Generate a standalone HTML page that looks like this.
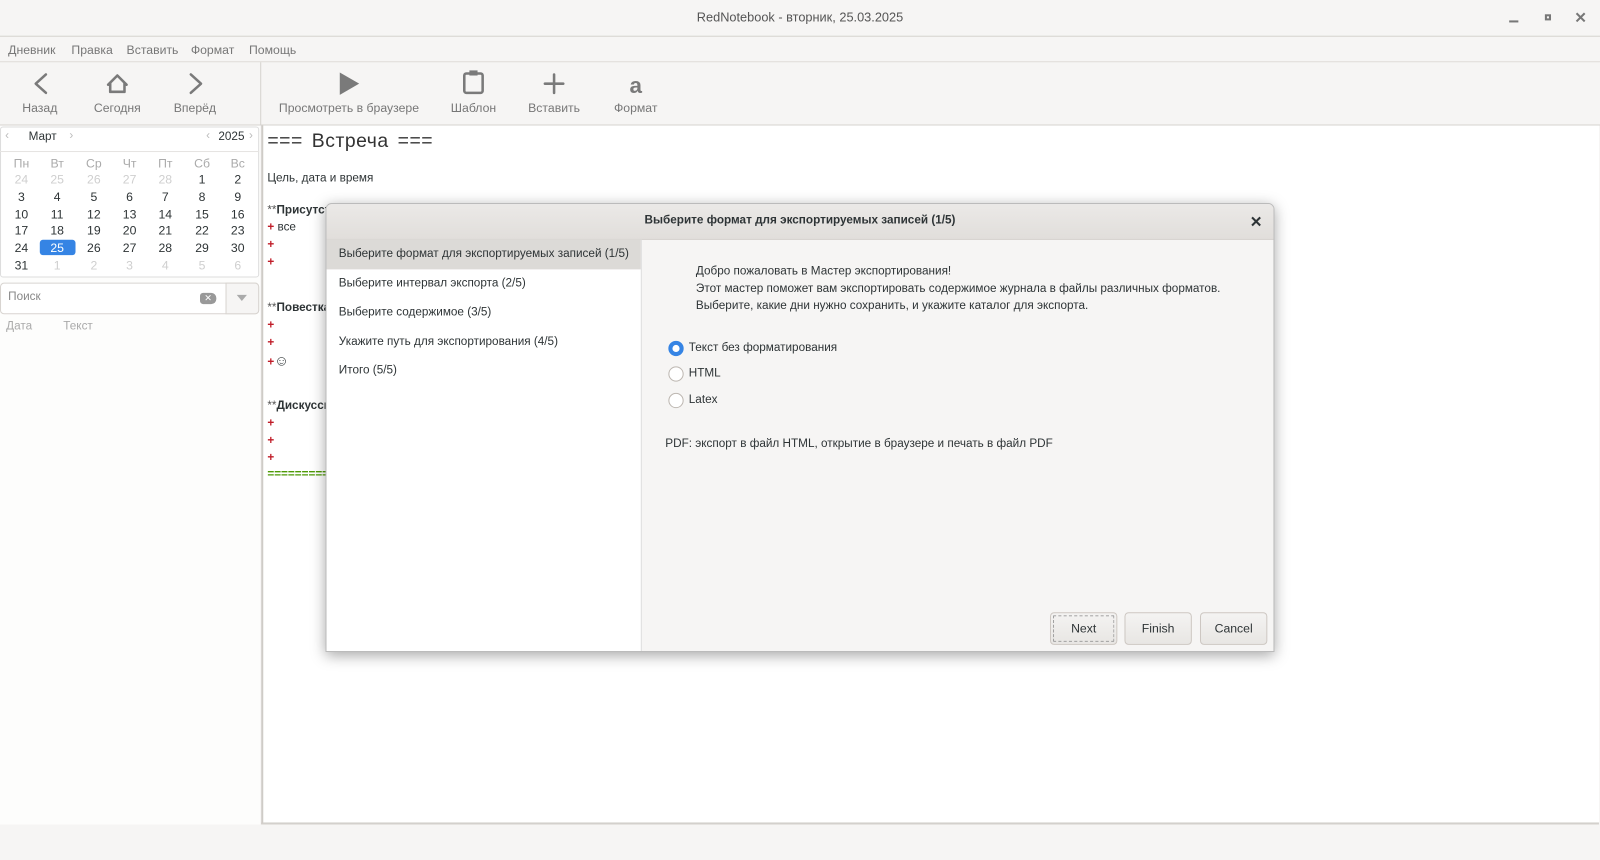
<!DOCTYPE html>
<html><head><meta charset="utf-8"><style>
*{box-sizing:border-box;margin:0;padding:0}
html,body{width:1600px;height:860px;overflow:hidden;background:#f6f5f4}
body{font-family:"Liberation Sans","DejaVu Sans",sans-serif}
#s{position:absolute;left:0;top:0;width:1568px;height:843px;transform:scale(1.0204);transform-origin:0 0;background:#f6f5f4;color:#2e3436;font-size:11.5px}
.a{position:absolute;white-space:nowrap}
.c{transform:translateX(-50%)}
.tb{color:#777;font-size:12px}
.cal span{position:absolute;transform:translateX(-50%);font-size:12px}
.g{color:#cfcfcf}
.h{color:#aaa}
.red{color:#c01c28;font-weight:bold}
.btn{position:absolute;top:600px;height:32px;width:66px;border:1px solid #cdc7c2;border-radius:4px;background:linear-gradient(#f4f3f2,#e8e6e3);text-align:center;line-height:30px;font-size:12px;color:#2e3436}
.radio{position:absolute;width:15px;height:15px;border-radius:50%;border:1px solid #bdb7b1;background:#fff}
</style></head><body><div id="s">
<div class="a c" style="left:784px;top:10px;font-size:12.5px;color:#555">RedNotebook - вторник, 25.03.2025</div>
<div class="a" style="left:1479px;top:20px;width:9px;height:2px;background:#777"></div>
<div class="a" style="left:1514px;top:14px;width:6px;height:6px;border:2px solid #777"></div>
<svg class="a" style="left:1544px;top:12px" width="10" height="10"><path d="M1 1L9 9M9 1L1 9" stroke="#777" stroke-width="2"/></svg>
<div class="a" style="left:0;top:35px;width:1568px;height:1px;background:#d6d3cf"></div>
<div class="a tb" style="left:8px;top:42px">Дневник</div>
<div class="a tb" style="left:70px;top:42px">Правка</div>
<div class="a tb" style="left:124px;top:42px">Вставить</div>
<div class="a tb" style="left:187px;top:42px">Формат</div>
<div class="a tb" style="left:244px;top:42px">Помощь</div>
<div class="a" style="left:0;top:60px;width:1568px;height:1px;background:#e0ddd9"></div>
<svg class="a" style="left:0;top:62px" width="660" height="40">
<g fill="none" stroke="#7a7a7a" stroke-width="2.5" stroke-linecap="round" stroke-linejoin="round">
<path d="M45 11 L35 20 L45 29"/><path d="M187 11 L197 20 L187 29"/>
<path d="M106 21 L115 12 L124 21 M108 19 V28 H122 V19"/>
<path d="M543 11 V29 M534 20 H552"/>
<rect x="455" y="10" width="18" height="19" rx="2"/></g>
<path d="M333 9 L352 20 L333 31 Z" fill="#7a7a7a"/>
<rect x="460" y="7" width="8" height="5" fill="#7a7a7a"/>
<text x="623" y="29" font-size="22" font-weight="bold" fill="#7a7a7a" text-anchor="middle" font-family="Liberation Sans">a</text>
</svg>
<div class="a c tb" style="left:39px;top:99px">Назад</div>
<div class="a c tb" style="left:115px;top:99px">Сегодня</div>
<div class="a c tb" style="left:191px;top:99px">Вперёд</div>
<div class="a c tb" style="left:342px;top:99px">Просмотреть в браузере</div>
<div class="a c tb" style="left:464px;top:99px">Шаблон</div>
<div class="a c tb" style="left:543px;top:99px">Вставить</div>
<div class="a c tb" style="left:623px;top:99px">Формат</div>
<div class="a" style="left:255px;top:61px;width:1px;height:62px;background:#d6d3cf"></div>
<div class="a" style="left:0;top:122px;width:1568px;height:1px;background:#d6d3cf"></div>
<div class="a" style="left:0;top:123px;width:255px;height:685px;background:#fdfdfc"></div>
<div class="a" style="left:0;top:124px;width:254px;height:148px;background:#fff;border:1px solid #ddd;border-radius:3px"></div>
<div class="a" style="left:0;top:148px;width:254px;height:1px;background:#e6e4e1"></div>
<div class="a" style="left:5px;top:127px;color:#bbb">‹</div>
<div class="a" style="left:28px;top:128px">Март</div>
<div class="a" style="left:68px;top:127px;color:#bbb">›</div>
<div class="a" style="left:202px;top:127px;color:#bbb">‹</div>
<div class="a" style="left:214px;top:128px">2025</div>
<div class="a" style="left:244px;top:127px;color:#bbb">›</div>
<div class="a" style="left:39px;top:235px;width:35px;height:15px;background:#3584e4;border-radius:3px"></div>
<div class="cal">
<span class="h" style="left:21px;top:153px">Пн</span><span class="h" style="left:56px;top:153px">Вт</span><span class="h" style="left:92px;top:153px">Ср</span><span class="h" style="left:127px;top:153px">Чт</span><span class="h" style="left:162px;top:153px">Пт</span><span class="h" style="left:198px;top:153px">Сб</span><span class="h" style="left:233px;top:153px">Вс</span>
<span class="g" style="left:21px;top:169px">24</span><span class="g" style="left:56px;top:169px">25</span><span class="g" style="left:92px;top:169px">26</span><span class="g" style="left:127px;top:169px">27</span><span class="g" style="left:162px;top:169px">28</span><span style="left:198px;top:169px">1</span><span style="left:233px;top:169px">2</span>
<span style="left:21px;top:186px">3</span><span style="left:56px;top:186px">4</span><span style="left:92px;top:186px">5</span><span style="left:127px;top:186px">6</span><span style="left:162px;top:186px">7</span><span style="left:198px;top:186px">8</span><span style="left:233px;top:186px">9</span>
<span style="left:21px;top:203px">10</span><span style="left:56px;top:203px">11</span><span style="left:92px;top:203px">12</span><span style="left:127px;top:203px">13</span><span style="left:162px;top:203px">14</span><span style="left:198px;top:203px">15</span><span style="left:233px;top:203px">16</span>
<span style="left:21px;top:219px">17</span><span style="left:56px;top:219px">18</span><span style="left:92px;top:219px">19</span><span style="left:127px;top:219px">20</span><span style="left:162px;top:219px">21</span><span style="left:198px;top:219px">22</span><span style="left:233px;top:219px">23</span>
<span style="left:21px;top:236px">24</span><span style="left:56px;top:236px;color:#fff">25</span><span style="left:92px;top:236px">26</span><span style="left:127px;top:236px">27</span><span style="left:162px;top:236px">28</span><span style="left:198px;top:236px">29</span><span style="left:233px;top:236px">30</span>
<span style="left:21px;top:253px">31</span><span class="g" style="left:56px;top:253px">1</span><span class="g" style="left:92px;top:253px">2</span><span class="g" style="left:127px;top:253px">3</span><span class="g" style="left:162px;top:253px">4</span><span class="g" style="left:198px;top:253px">5</span><span class="g" style="left:233px;top:253px">6</span>
</div>
<div class="a" style="left:0;top:277px;width:254px;height:31px;background:#fff;border:1px solid #d8d4d0;border-radius:4px"></div>
<div class="a" style="left:221px;top:277px;width:33px;height:31px;background:#f6f5f4;border:1px solid #d8d4d0;border-radius:0 4px 4px 0"></div>
<div class="a" style="left:8px;top:285px;color:#888">Поиск</div>
<div class="a" style="left:196px;top:287px;width:16px;height:11px;background:#999;border-radius:3px 5px 5px 3px;color:#fff;font-size:9px;line-height:11px;text-align:center">✕</div>
<div class="a" style="left:232px;top:289px;width:0;height:0;border-left:5px solid transparent;border-right:5px solid transparent;border-top:6px solid #aaa"></div>
<div class="a h" style="left:6px;top:314px">Дата</div>
<div class="a h" style="left:62px;top:314px">Текст</div>
<div class="a" style="left:256px;top:123px;width:1311px;height:685px;background:#fff;border-left:2px solid #cfcbc7;border-bottom:2px solid #d3d0cc"></div>
<div class="a" style="left:262px;top:128px;font-size:19px;color:#333;word-spacing:3px;letter-spacing:0.5px">=== Встреча ===</div>
<div class="a" style="left:262px;top:169px">Цель, дата и время</div>
<div class="a" style="left:262px;top:200px"><span style="color:#555">**</span><b>Присутствующие</b></div>
<div class="a" style="left:262px;top:217px"><span class="red">+</span> все</div>
<div class="a red" style="left:262px;top:234px">+</div>
<div class="a red" style="left:262px;top:251px">+</div>
<div class="a" style="left:262px;top:296px"><span style="color:#555">**</span><b>Повестка</b></div>
<div class="a red" style="left:262px;top:313px">+</div>
<div class="a red" style="left:262px;top:330px">+</div>
<div class="a" style="left:262px;top:345px"><span class="red">+</span><span style="font-size:14px">☺</span></div>
<div class="a" style="left:262px;top:392px"><span style="color:#555">**</span><b>Дискуссия</b></div>
<div class="a red" style="left:262px;top:409px">+</div>
<div class="a red" style="left:262px;top:426px">+</div>
<div class="a red" style="left:262px;top:443px">+</div>
<div class="a" style="left:262px;top:459px;color:#4e9a06;font-weight:bold">==========</div>
<div class="a" style="left:319px;top:199px;width:930px;height:440px;background:#f6f5f4;border:1px solid #bbb;border-radius:6px 6px 0 0;box-shadow:0 3px 14px rgba(0,0,0,.35);overflow:hidden">
<div class="a" style="left:0;top:0;width:930px;height:35px;background:linear-gradient(#ebe9e7,#e1dedb);border-bottom:1px solid #d0ccc8"></div>
<div class="a c" style="left:464px;top:10px;font-weight:bold;font-size:11.5px;color:#2e3436">Выберите формат для экспортируемых записей (1/5)</div>
<svg class="a" style="left:906px;top:12px" width="10" height="10"><path d="M1 1L9 9M9 1L1 9" stroke="#2e3436" stroke-width="2"/></svg>
<div class="a" style="left:0;top:35px;width:309px;height:405px;background:#fff;border-right:1px solid #ddd"></div>
<div class="a" style="left:0;top:35px;width:308px;height:29px;background:#dcdad7"></div>
<div class="a" style="left:12px;top:43px">Выберите формат для экспортируемых записей (1/5)</div>
<div class="a" style="left:12px;top:72px">Выберите интервал экспорта (2/5)</div>
<div class="a" style="left:12px;top:100px">Выберите содержимое (3/5)</div>
<div class="a" style="left:12px;top:129px">Укажите путь для экспортирования (4/5)</div>
<div class="a" style="left:12px;top:157px">Итого (5/5)</div>
<div class="a" style="left:362px;top:58px;line-height:17px">Добро пожаловать в Мастер экспортирования!<br>Этот мастер поможет вам экспортировать содержимое журнала в файлы различных форматов.<br>Выберите, какие дни нужно сохранить, и укажите каталог для экспорта.</div>
<div class="radio" style="left:335px;top:134px;border:4px solid #3584e4"></div>
<div class="a" style="left:355px;top:135px">Текст без форматирования</div>
<div class="radio" style="left:335px;top:159px"></div>
<div class="a" style="left:355px;top:160px">HTML</div>
<div class="radio" style="left:335px;top:185px"></div>
<div class="a" style="left:355px;top:186px">Latex</div>
<div class="a" style="left:332px;top:229px">PDF: экспорт в файл HTML, открытие в браузере и печать в файл PDF</div>
</div>
<div class="btn" style="left:1029px;outline:1px dashed #999;outline-offset:-4px">Next</div>
<div class="btn" style="left:1102px">Finish</div>
<div class="btn" style="left:1176px">Cancel</div>
</div></body></html>
